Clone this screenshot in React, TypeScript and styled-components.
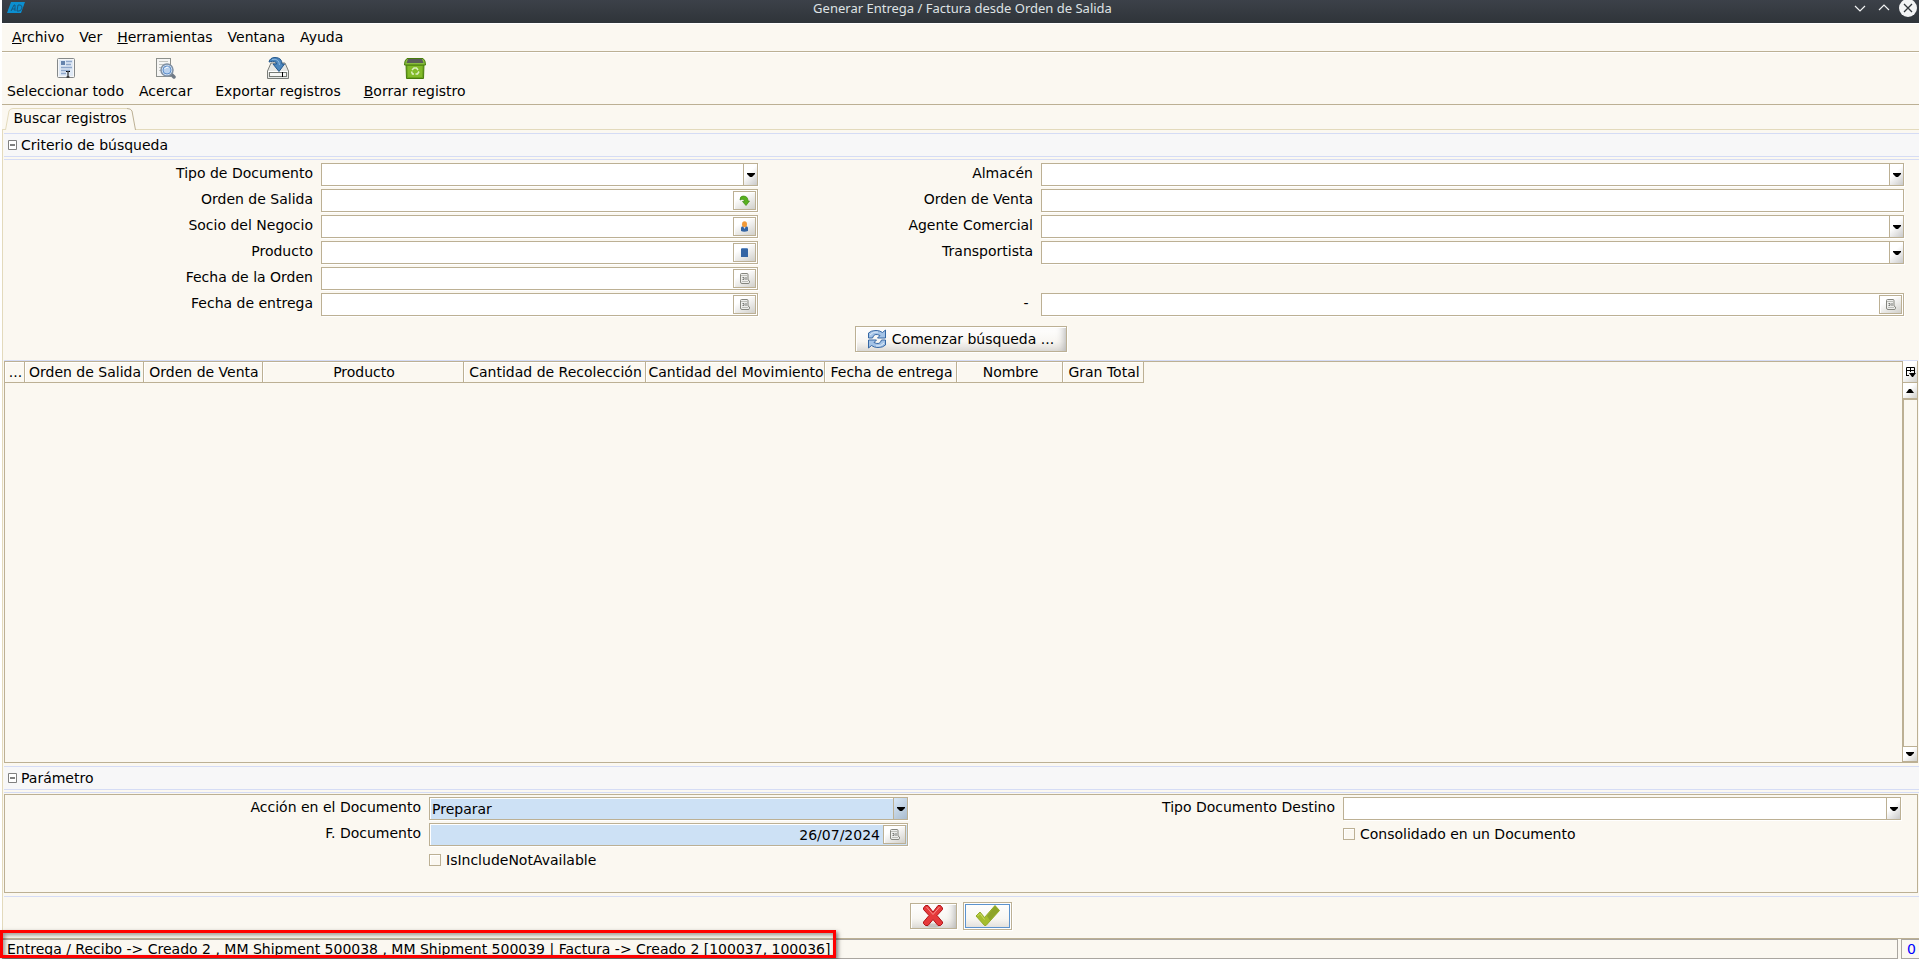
import React, { useId } from "react";
import styled, { createGlobalStyle, css } from "styled-components";

const edge = "#bcb094";
const paper = "#fbf8f1";
const tint = "#d5dcf5";
const sand = "#e3dabc";
const mandatory = "#cde1f5";

const GlobalStyle = createGlobalStyle`
  * { box-sizing: border-box; }
  body {
    margin: 0;
    background: #fff;
    color: #000;
    font-family: "DejaVu Sans", sans-serif;
    font-size: 14px;
    line-height: 18px;
  }
  button, input, select { font: inherit; color: inherit; margin: 0; }
`;

const Window = styled.div`
  display: flex;
  flex-direction: column;
  min-height: 100vh;
  padding-left: 2px;
`;

const TitleBar = styled.header`
  display: grid;
  grid-template-columns: 92px 1fr 88px;
  align-items: start;
  height: 23px;
  background: linear-gradient(#3c4149, #2f3439);
`;

const Title = styled.h1`
  margin: 0;
  text-align: center;
  font: 400 13px/17px "Noto Sans", sans-serif;
  color: #dfe2e4;
`;

const LogoBox = styled.span`
  display: flex;
  padding: 1px 4px;
`;

const WindowButtons = styled.div`
  display: flex;
  justify-content: flex-end;
  gap: 6px;
  padding-right: 2px;
`;

const WindowButton = styled.button`
  width: 18px;
  height: 17px;
  padding: 0;
  border: 0;
  background: none;
  display: flex;
`;

const MenuBar = styled.nav`
  display: flex;
  gap: 15px;
  height: 29px;
  padding: 4px 10px 6px;
  background: ${paper};
  border-top: 1px solid #fff;
  border-bottom: 1px solid ${edge};
`;

const MenuItem = styled.button`
  padding: 0;
  border: 0;
  background: none;
`;

const ToolBar = styled.div`
  display: flex;
  gap: 15px;
  height: 53px;
  padding: 4px 5px;
  background: ${paper};
  border-top: 1px solid #fff;
  border-bottom: 1px solid ${edge};
`;

const ToolButton = styled.button<{ $pad?: number }>`
  display: flex;
  flex-direction: column;
  align-items: center;
  gap: 3px;
  padding: 0 ${(p) => p.$pad ?? 0}px;
  border: 0;
  background: none;
  white-space: nowrap;
`;

const TabStrip = styled.div`
  display: flex;
  height: 25px;
  padding-left: 3px;
  padding-top: 3px;
  background: linear-gradient(${sand}, ${sand}) bottom / 100% 1px no-repeat ${paper};
`;

const Tab = styled.button`
  position: relative;
  width: 132px;
  height: 22px;
  padding: 0 2px 2px 0;
  border: 0;
  background: none;
  text-align: center;
  white-space: nowrap;
`;

const TabShape = styled.svg`
  position: absolute;
  inset: 0;
  z-index: 0;
`;

const TabText = styled.span`
  position: relative;
`;

const Content = styled.main`
  flex: 1;
  display: flex;
  flex-direction: column;
  padding: 3px 0 0 1px;
  background: ${paper};
  border-left: 1px solid ${sand};
`;

const SectionHeader = styled.button`
  display: flex;
  align-items: center;
  gap: 4px;
  width: 100%;
  height: 24px;
  padding: 0 4px;
  border: solid ${tint};
  border-width: 1px 0;
  background: #f7f7f8;
  text-align: left;
`;

const Criteria = styled.form`
  display: flex;
  flex-direction: column;
  margin-top: 2px;
  padding-top: 3px;
  border-top: 1px solid ${tint};
`;

const CriteriaGrid = styled.div`
  display: grid;
  grid-template-columns: minmax(0, 309fr) minmax(0, 437fr) minmax(0, 267fr) minmax(0, 863fr);
  grid-auto-rows: 23px;
  gap: 3px 8px;
  padding-right: 15px;
`;

const Label = styled.label<{ $col?: number }>`
  text-align: right;
  line-height: 20px;
  white-space: nowrap;
  ${(p) => p.$col && css`grid-column: ${p.$col};`}
`;

const Field = styled.div<{ $mandatory?: boolean }>`
  display: flex;
  height: 23px;
  min-width: 0;
  border: 1px solid ${edge};
  background: ${(p) => (p.$mandatory ? mandatory : "#fff")};
  box-shadow: 1px 1px 0 #fff${(p) => (p.$mandatory ? ", inset 1px 1px 0 #fff" : "")};
`;

const Entry = styled.input<{ $right?: boolean }>`
  flex: 1;
  min-width: 0;
  padding: 0 2px;
  border: 0;
  background: none;
  outline: 0;
  text-align: ${(p) => (p.$right ? "right" : "left")};
`;

const Choice = styled.select`
  flex: 1;
  min-width: 0;
  padding: 0 2px;
  border: 0;
  background: none;
  outline: 0;
  appearance: none;
`;

const ArrowBox = styled.span<{ $mandatory?: boolean }>`
  display: flex;
  align-items: center;
  justify-content: center;
  width: 14px;
  border-left: 1px solid ${edge};
  background: ${(p) =>
    p.$mandatory
      ? "linear-gradient(135deg, #d9e8f7, #a9bccf)"
      : "linear-gradient(135deg, #fff 40%, #c9c9c9)"};
`;

const LookupButton = styled.button`
  display: flex;
  align-items: center;
  justify-content: center;
  width: 23px;
  height: 19px;
  margin: 1px;
  padding: 0;
  border: 1px solid ${edge};
  box-shadow: inset 1px 1px 0 #fff;
  background: linear-gradient(150deg, #fff 30%, #d0cfca);
`;

const SearchRow = styled.div`
  display: flex;
  justify-content: center;
  padding: 10px 2px 9px 0;
`;

const PushButton = styled.button<{ $width: number; $default?: boolean }>`
  display: flex;
  align-items: center;
  justify-content: center;
  gap: 5px;
  width: ${(p) => p.$width}px;
  height: ${(p) => (p.$default ? 28 : 26)}px;
  padding: 0;
  border: 1px solid ${edge};
  background: linear-gradient(#fff, #f8f6f2 60%, #dedcd8);
  box-shadow: 1px 1px 0 #fff, inset 1px 1px 0 #fff, inset -7px 0 8px -6px #aaa;
  white-space: nowrap;
  ${(p) =>
    p.$default &&
    css`
      box-shadow: 1px 1px 0 #fff, inset 0 0 0 1px #fff, inset 0 0 0 2px #5c93ce;
    `}
`;

const Results = styled.section`
  flex: 1;
  display: flex;
  min-height: 200px;
  margin-right: 1px;
  border: 1px solid ${edge};
  border-top: 0;
  box-shadow: inset 0 1px 0 ${edge}, 0 -1px 0 ${tint};
`;

const TableArea = styled.div`
  flex: 1;
  padding-top: 1px;
`;

const Table = styled.table`
  table-layout: fixed;
  width: 1139px;
  border-collapse: separate;
  border-spacing: 0;
`;

const HeaderCell = styled.th<{ $width: number }>`
  width: ${(p) => p.$width}px;
  height: 21px;
  padding: 0 0 0 2px;
  border: solid ${edge};
  border-width: 0 1px 1px 0;
  box-shadow: inset 1px 1px 0 #fff;
  font-weight: 400;
  text-align: center;
  white-space: nowrap;
`;

const ScrollColumn = styled.div`
  display: flex;
  flex-direction: column;
  width: 15px;
  border-left: 1px solid ${edge};
`;

const ScrollButton = styled.button<{ $height: number }>`
  display: flex;
  align-items: center;
  justify-content: center;
  height: ${(p) => p.$height}px;
  padding: 0;
  border: 0;
  border-bottom: 1px solid ${edge};
  background: linear-gradient(135deg, #fff 40%, #d2d1cd);
`;

const ScrollThumb = styled.div`
  flex: 1;
  border: solid ${edge};
  border-width: 1px 0 1px 1px;
  background: ${paper};
`;

const Spacer = styled.div`
  height: 3px;
`;

const Parameters = styled.form`
  margin-top: 3px;
  padding: 1px 0 3px;
  box-shadow: 0 -1px 0 ${tint};
  border-bottom: 1px solid ${tint};
`;

const ParameterPanel = styled.div`
  display: grid;
  grid-template-columns: minmax(0, 416fr) minmax(0, 479fr) minmax(0, 419fr) minmax(0, 558fr);
  grid-auto-rows: 23px;
  gap: 3px 8px;
  min-height: 99px;
  margin-right: 1px;
  padding: 2px 16px 12px 0;
  border: 1px solid ${edge};
`;

const CheckLine = styled.label<{ $col: number }>`
  grid-column: ${(p) => p.$col};
  display: flex;
  align-items: center;
  gap: 5px;
  height: 21px;
  white-space: nowrap;
`;

const CheckBox = styled.input`
  appearance: none;
  width: 12px;
  height: 12px;
  border: 1px solid ${edge};
  background: ${paper};
  box-shadow: inset 1px 1px 0 #fff;
`;

const Actions = styled.div`
  display: flex;
  align-items: center;
  justify-content: center;
  gap: 6px;
  padding: 5px 2px 8px 0;
`;

const StatusBar = styled.footer`
  display: grid;
  grid-template-columns: 1fr 18px;
  gap: 3px;
  height: 21px;
  background: ${paper};
  border-top: 1px solid ${edge};
`;

const StatusCell = styled.div<{ $count?: boolean }>`
  position: relative;
  height: 20px;
  padding: 0 5px;
  border: 1px solid #aaa6a0;
  border-left-width: ${(p) => (p.$count ? 1 : 0)}px;
  border-right-width: ${(p) => (p.$count ? 0 : 1)}px;
  color: ${(p) => (p.$count ? "#00f" : "#000")};
  white-space: nowrap;
`;

const Highlight = styled.span`
  position: absolute;
  inset: -10px auto 0 -2px;
  width: 836px;
  border: 3px solid #f00;
  box-shadow: 2px 2px 4px rgba(0, 0, 0, 0.5), inset 2px 2px 4px rgba(0, 0, 0, 0.4);
  pointer-events: none;
`;

const Triangle = ({ up = false }: { up?: boolean }) => (
  <svg width="8" height="4" viewBox="0 0 8 4" aria-hidden="true">
    <path d={up ? "M0 4H8L5 0H3Z" : "M0 0H8V1L5 4H3L0 1Z"} />
  </svg>
);

const Logo = () => (
  <svg width="20" height="14" viewBox="0 0 20 14" role="img" aria-label="ADempiere">
    <path d="M5 1H19L15 12H1Z" fill="#0c8fd0" />
    <path d="M5 10L8 4H9V10M6 8H9M12 4L11 10H13Q15 10 16 7Q16 4 14 4Z" fill="none" stroke="#17577f" />
  </svg>
);

const Expander = () => (
  <svg width="9" height="10" viewBox="0 0 9 10" aria-hidden="true">
    <path d="M.5 .5H8.5V9.5H.5Z" fill="#fff" stroke="#808080" />
    <path d="M2 5H7" stroke="#000" />
  </svg>
);

const SelectAllIcon = () => (
  <svg width="22" height="22" viewBox="0 0 22 22" aria-hidden="true">
    <rect x="2.500" y="1.500" width="17" height="19" rx="1" fill="#f5f6f7" stroke="#85898a" />
    <rect x="4" y="3" width="14" height="16" fill="#dfe9f5" />
    <path d="M6 4H10V8H6Z" fill="#6684ad" />
    <path d="M11 4.500H17M11 7.500H16M6 10.500H17M6 13.500H15M6 16.500H11" stroke="#8fa8cb" strokeWidth="1.500" />
    <path d="M11 14.500H12.500L13 15L13.500 14.500H15M13 15V20M11.500 20H14.500" fill="none" stroke="#000" />
  </svg>
);

const ZoomIcon = () => (
  <svg width="22" height="22" viewBox="0 0 22 22" aria-hidden="true">
    <rect x="1.500" y="1.500" width="14" height="18" fill="#f5f5f3" stroke="#8d908c" />
    <path d="M4 4.500H13M4 7.500H9M4 10.500H7M4 13.500H7" stroke="#c1c3bf" />
    <path d="M16 17L19 20" stroke="#707a85" strokeWidth="3.500" strokeLinecap="round" />
    <circle cx="12" cy="13" r="6" fill="#cfe0f3" stroke="#8090a3" strokeWidth="1.500" />
    <circle cx="12" cy="13" r="4" fill="#b9d1ed" stroke="#5f8fca" />
    <path d="M9.500 12Q10.500 10 13.500 10" stroke="#fff" fill="none" />
  </svg>
);

const ExportIcon = () => (
  <svg width="22" height="22" viewBox="0 0 22 22" aria-hidden="true">
    <path d="M4 6H18L21.500 14V21.500H.5V14Z" fill="#e6e7e4" stroke="#7a7d78" />
    <path d="M1 14.500H21" stroke="#fff" />
    <rect x="2.500" y="15.500" width="17" height="4" fill="#f6f6f4" stroke="#777b75" />
    <path d="M15.500 15V20" stroke="#000" />
    <path d="M2 5Q3 .5 8 .5Q15 .5 15 7H17.500L12 14.500L6 7H9.500Q9.500 3 2 5Z" fill="#4c86bd" stroke="#23578c" />
    <path d="M5 2.500Q12 1 12.500 8" fill="none" stroke="#8eb8de" />
  </svg>
);

const TrashIcon = () => (
  <svg width="22" height="22" viewBox="0 0 22 22" aria-hidden="true">
    <path d="M2 7H20L19.500 21.500H2.500Z" fill="#6ca51d" stroke="#477c0b" />
    <path d="M3.500 9H18.500L18 20H4Z" fill="#83bb2a" />
    <path d="M3 1.500H19Q21.500 3 21.500 8H.5Q.5 3 3 1.500Z" fill="#89bd3d" stroke="#477c0b" />
    <path d="M4 2H18L19.500 6H2.500Z" fill="#5b5d5a" />
    <path d="M8 13L10 11H12.500L14 13M15 14.500L13.500 17H11.500M10 17H8.500L7.500 14.500" fill="none" stroke="#dcf0c0" strokeWidth="1.500" />
  </svg>
);

const RefreshIcon = () => (
  <svg width="20" height="20" viewBox="0 0 20 20" aria-hidden="true">
    <path d="M1.500 9V4Q4 1.500 9 1.500Q13 1.500 15.500 3.500L18.500 1V9H10.500L13 6.500Q7 3.500 5.500 9Z" fill="#a4c3e6" stroke="#3567a4" />
    <path d="M18.500 11V16Q16 18.500 11 18.500Q7 18.500 4.500 16.500L1.500 19V11H9.500L7 13.500Q13 16.500 14.500 11Z" fill="#a4c3e6" stroke="#3567a4" />
    <path d="M3 6Q6 2 11 3M17 14Q14 18 9 17" fill="none" stroke="#e1edf9" />
  </svg>
);

const DownloadIcon = () => (
  <svg width="11" height="11" viewBox="0 0 11 11" aria-hidden="true">
    <path d="M1 5Q1 1 4 1Q9 1 9 6H10.500L7 10.500L3.500 6.500H5.500Q5 3 1 5Z" fill="#58b11f" stroke="#3c8a12" strokeWidth=".7" />
  </svg>
);

const PersonIcon = () => (
  <svg width="11" height="11" viewBox="0 0 11 11" aria-hidden="true">
    <path d="M2 10V7Q2 5 5.500 5Q9 5 9 7V10Q5 11.500 2 10Z" fill="#3465a4" />
    <path d="M4.500 6H6.500L5.500 8Z" fill="#dce8f5" />
    <ellipse cx="5.500" cy="3.200" rx="2.500" ry="3" fill="#f29a38" />
  </svg>
);

const ProductIcon = () => (
  <svg width="11" height="11" viewBox="0 0 11 11" aria-hidden="true">
    <path d="M3 1H8L9 2V10H2V2Z" fill="#3465a4" />
    <path d="M3 1.500H8" stroke="#5d8ac2" />
  </svg>
);

const CalendarIcon = () => (
  <svg width="12" height="11" viewBox="0 0 12 11" aria-hidden="true">
    <path d="M1.500 1.500Q1.500 .5 2.500 .5H8Q9 .5 9 1.500V7L10.500 8V9.500Q10.500 10.500 9 10.500H3Q1.500 10.500 1.500 9Z" fill="#eeeeec" stroke="#85867f" />
    <path d="M2 2.500H9M3 8.500H9" stroke="#bdbeb9" />
    <path d="M3.500 4.500H5V6.500H3.500M7 4V7" fill="none" stroke="#777974" />
  </svg>
);

const ColumnsIcon = () => (
  <svg width="11" height="12" viewBox="0 0 11 12" aria-hidden="true">
    <path d="M1.500 10V1.500H9.500V7M1.500 4.500H9.500M5.500 2V6M1 9.500H4" fill="none" stroke="#000" />
    <path d="M4 7H11L8 11H7Z" />
  </svg>
);

const CancelIcon = () => (
  <svg width="22" height="24" viewBox="0 0 22 24" aria-hidden="true">
    <ellipse cx="11" cy="21.500" rx="8" ry="2" fill="#000" opacity=".12" />
    <path d="M3.500 1.500H6L11 8L16 1.500H18.500L20.500 4V5.500L15 11.500L20.500 18V19.500L18.500 21.500H16L11 15.500L6 21.500H3.500L1.500 19.500V18L7 11.500L1.500 5.500V4Z" fill="#e6393b" stroke="#b01217" />
    <path d="M4.500 3L11 10.500L17.500 3" fill="none" stroke="#f78f8d" />
  </svg>
);

const AcceptIcon = () => (
  <svg width="25" height="24" viewBox="0 0 25 24" aria-hidden="true">
    <path d="M1 12L5 8L9.500 13.500L20 1.500L24.500 6.500L11 21.500H9.500Z" fill="#a5bd2d" stroke="#91aa28" />
    <path d="M20 2L24 6.500L15 16.500L12 12Z" fill="#8da42a" />
    <path d="M2.500 12L5 9.500L9.500 15.500" fill="none" stroke="#cadc62" />
  </svg>
);

type FieldKind = "select" | "text" | "order" | "partner" | "product" | "date";

interface CriterionProps {
  label: string;
  kind: FieldKind;
  col?: number;
  name?: string;
  value?: string;
  mandatory?: boolean;
}

const lookupIcons = {
  order: <DownloadIcon />,
  partner: <PersonIcon />,
  product: <ProductIcon />,
  date: <CalendarIcon />,
};

const Criterion = ({ label, kind, col, name, value = "", mandatory: required }: CriterionProps) => {
  const id = useId();
  return (
    <>
      <Label htmlFor={id} $col={col}>{label}</Label>
      <Field $mandatory={required}>
        {kind === "select" ? (
          <>
            <Choice id={id} aria-label={name}>
              <option>{value}</option>
            </Choice>
            <ArrowBox $mandatory={required}><Triangle /></ArrowBox>
          </>
        ) : (
          <Entry id={id} aria-label={name} defaultValue={value} $right={kind === "date"} />
        )}
        {kind !== "select" && kind !== "text" && (
          <LookupButton type="button" aria-label={`Buscar ${name ?? label}`}>
            {lookupIcons[kind]}
          </LookupButton>
        )}
      </Field>
    </>
  );
};

const columns: [string, number][] = [
  ["...", 20],
  ["Orden de Salida", 119],
  ["Orden de Venta", 119],
  ["Producto", 201],
  ["Cantidad de Recolección", 182],
  ["Cantidad del Movimiento", 179],
  ["Fecha de entrega", 132],
  ["Nombre", 106],
  ["Gran Total", 81],
];

export default function App() {
  return (
    <>
      <GlobalStyle />
      <Window>
        <TitleBar>
          <LogoBox><Logo /></LogoBox>
          <Title>Generar Entrega / Factura desde Orden de Salida</Title>
          <WindowButtons>
            <WindowButton aria-label="Minimizar">
              <svg width="18" height="17" viewBox="0 0 18 17"><path d="M4 6L9 11L14 6" fill="none" stroke="#f3f4f5" strokeWidth="1.200" /></svg>
            </WindowButton>
            <WindowButton aria-label="Maximizar">
              <svg width="18" height="17" viewBox="0 0 18 17"><path d="M4 10L9 5L14 10" fill="none" stroke="#f3f4f5" strokeWidth="1.200" /></svg>
            </WindowButton>
            <WindowButton aria-label="Cerrar">
              <svg width="18" height="17" viewBox="0 0 18 17"><circle cx="9" cy="8" r="9" fill="#f3f4f5" /><path d="M5 4L13 12M13 4L5 12" stroke="#31363b" strokeWidth="1.300" /></svg>
            </WindowButton>
          </WindowButtons>
        </TitleBar>

        <MenuBar>
          <MenuItem><u>A</u>rchivo</MenuItem>
          <MenuItem>Ver</MenuItem>
          <MenuItem><u>H</u>erramientas</MenuItem>
          <MenuItem>Ventana</MenuItem>
          <MenuItem>Ayuda</MenuItem>
        </MenuBar>

        <ToolBar>
          <ToolButton><SelectAllIcon /><span>Seleccionar todo</span></ToolButton>
          <ToolButton><ZoomIcon /><span>Acercar</span></ToolButton>
          <ToolButton $pad={8}><ExportIcon /><span>Exportar registros</span></ToolButton>
          <ToolButton><TrashIcon /><span><u>B</u>orrar registro</span></ToolButton>
        </ToolBar>

        <TabStrip role="tablist">
          <Tab role="tab" aria-selected="true">
            <TabShape width="132" height="22" viewBox="0 0 132 22">
              <path d="M0 22L5 3Q6 .5 9 .5H123Q126 .5 127 3L131 22Z" fill={paper} />
              <path d="M.5 22L4 3Q5 .5 8 .5H122" fill="none" stroke={sand} />
              <path d="M122 .5Q126 .5 127 3L130.500 22" fill="none" stroke={edge} />
            </TabShape>
            <TabText>Buscar registros</TabText>
          </Tab>
        </TabStrip>

        <Content>
          <SectionHeader type="button" aria-expanded="true"><Expander />Criterio de búsqueda</SectionHeader>
          <Criteria onSubmit={(e: React.FormEvent) => e.preventDefault()}>
            <CriteriaGrid>
              <Criterion label="Tipo de Documento" kind="select" />
              <Criterion label="Almacén" kind="select" />
              <Criterion label="Orden de Salida" kind="order" />
              <Criterion label="Orden de Venta" kind="text" />
              <Criterion label="Socio del Negocio" kind="partner" />
              <Criterion label="Agente Comercial" kind="select" />
              <Criterion label="Producto" kind="product" />
              <Criterion label="Transportista" kind="select" />
              <Criterion label="Fecha de la Orden" kind="date" />
              <Criterion label="Fecha de entrega" kind="date" col={1} />
              <Criterion label="-&nbsp;" kind="date" name="Fecha de entrega hasta" />
            </CriteriaGrid>
            <SearchRow>
              <PushButton $width={212}><RefreshIcon />Comenzar búsqueda ...</PushButton>
            </SearchRow>
          </Criteria>

          <Results>
            <TableArea>
              <Table>
                <thead>
                  <tr>
                    {columns.map(([name, width]) => (
                      <HeaderCell key={name} $width={width} scope="col">{name}</HeaderCell>
                    ))}
                  </tr>
                </thead>
                <tbody />
              </Table>
            </TableArea>
            <ScrollColumn>
              <ScrollButton $height={22} aria-label="Columnas"><ColumnsIcon /></ScrollButton>
              <ScrollButton $height={16} aria-label="Subir"><Triangle up /></ScrollButton>
              <ScrollThumb />
              <ScrollButton $height={15} aria-label="Bajar"><Triangle /></ScrollButton>
            </ScrollColumn>
          </Results>

          <Spacer />
          <SectionHeader type="button" aria-expanded="true"><Expander />Parámetro</SectionHeader>
          <Parameters onSubmit={(e: React.FormEvent) => e.preventDefault()}>
            <ParameterPanel>
              <Criterion label="Acción en el Documento" kind="select" value="Preparar" mandatory />
              <Criterion label="Tipo Documento Destino" kind="select" />
              <Criterion label="F. Documento" kind="date" value="26/07/2024" mandatory />
              <CheckLine $col={4}><CheckBox type="checkbox" />Consolidado en un Documento</CheckLine>
              <CheckLine $col={2}><CheckBox type="checkbox" />IsIncludeNotAvailable</CheckLine>
            </ParameterPanel>
          </Parameters>
          <Actions>
            <PushButton $width={47} aria-label="Cancelar"><CancelIcon /></PushButton>
            <PushButton $width={49} $default aria-label="Aceptar"><AcceptIcon /></PushButton>
          </Actions>
        </Content>

        <StatusBar>
          <StatusCell>
            Entrega / Recibo -&gt; Creado 2 , MM Shipment 500038 , MM Shipment 500039 | Factura -&gt; Creado 2 [100037, 100036]
            <Highlight />
          </StatusCell>
          <StatusCell $count>0</StatusCell>
        </StatusBar>
      </Window>
    </>
  );
}
